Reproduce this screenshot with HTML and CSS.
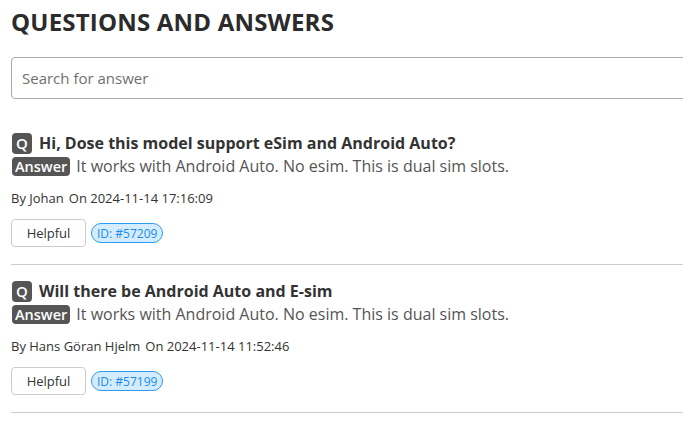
FILE: index.html
```html
<!DOCTYPE html>
<html>
<head>
<meta charset="utf-8">
<link rel="stylesheet" href="styles.css">
</head>
<body>
<div class="page">
  <h1 class="title">QUESTIONS AND ANSWERS</h1>
  <div class="search"><input class="search-input" type="text" placeholder="Search for answer"></div>
  <div class="list">
    <div class="item">
      <div class="q-row"><span class="q-badge">Q</span><span class="q-text">Hi, Dose this model support eSim and Android Auto?</span></div>
      <div class="a-row"><span class="a-badge">Answer</span><span class="a-text">It works with Android Auto. No esim. This is dual sim slots.</span></div>
      <div class="meta"><span>By Johan</span><span>On 2024-11-14 17:16:09</span></div>
      <div class="actions"><button class="helpful">Helpful</button><span class="id-badge">ID: #57209</span></div>
    </div>
    <div class="item">
      <div class="q-row"><span class="q-badge">Q</span><span class="q-text">Will there be Android Auto and E-sim</span></div>
      <div class="a-row"><span class="a-badge">Answer</span><span class="a-text">It works with Android Auto. No esim. This is dual sim slots.</span></div>
      <div class="meta"><span>By Hans Göran Hjelm</span><span>On 2024-11-14 11:52:46</span></div>
      <div class="actions"><button class="helpful">Helpful</button><span class="id-badge">ID: #57199</span></div>
    </div>
  </div>
</div>
</body>
</html>
```
FILE: styles.css
```css
html, body {
  margin: 0;
  padding: 0;
  background: #fff;
  overflow: hidden;
}
body {
  font-family: "Open Sans", "Liberation Sans", sans-serif;
  color: #333;
}
.page {
  width: 760px;
  padding: 7px 0 0 11px;
}
.title {
  margin: 0;
  font-size: 24px;
  font-weight: 700;
  line-height: 30px;
  color: #2b2b2b;
  letter-spacing: 0.2px;
}
.search {
  margin-top: 20px;
}
.search-input {
  box-sizing: border-box;
  width: 100%;
  height: 42px;
  border: 1px solid #aaa;
  border-radius: 4px;
  padding: 0 10px;
  font-family: inherit;
  font-size: 15px;
  color: #333;
  outline: none;
}
.search-input::placeholder {
  color: #707070;
}
.list {
  margin-top: 33px;
}
.item {
  border-bottom: 1px solid #ccc;
  padding-bottom: 17px;
  margin-bottom: 15px;
}
.q-row {
  display: flex;
  align-items: center;
  gap: 7px;
  padding-left: 1px;
  height: 22px;
}
.q-badge {
  display: inline-flex;
  align-items: center;
  justify-content: center;
  width: 20px;
  height: 21px;
  border-radius: 4px;
  background: #555;
  color: #fff;
  font-size: 15px;
  font-weight: 600;
}
.q-text {
  font-size: 16px;
  font-weight: 700;
  color: #333;
}
.a-row {
  display: flex;
  align-items: center;
  gap: 6px;
  padding-left: 1px;
  margin-top: 2px;
  height: 20px;
}
.a-badge {
  display: inline-flex;
  align-items: center;
  height: 19px;
  padding: 0 3px;
  border-radius: 4px;
  background: #555;
  color: #fff;
  font-size: 14.5px;
  font-weight: 600;
}
.a-text {
  font-size: 16px;
  color: #555;
}
.meta {
  display: flex;
  gap: 5px;
  margin-top: 13px;
  font-size: 13px;
  color: #333;
  line-height: 18px;
}
.actions {
  display: flex;
  align-items: center;
  gap: 5px;
  margin-top: 12px;
}
.helpful {
  box-sizing: border-box;
  width: 75px;
  height: 28px;
  border: 1px solid #ccc;
  border-radius: 4px;
  background: #fff;
  font-family: inherit;
  font-size: 13px;
  color: #333;
  padding: 0;
}
.id-badge {
  display: inline-flex;
  align-items: center;
  height: 20px;
  box-sizing: border-box;
  padding: 0 5px;
  border: 1px solid #2d9bf0;
  border-radius: 10px;
  background: #d4ecff;
  color: #1a8ce6;
  font-size: 12px;
}
```
